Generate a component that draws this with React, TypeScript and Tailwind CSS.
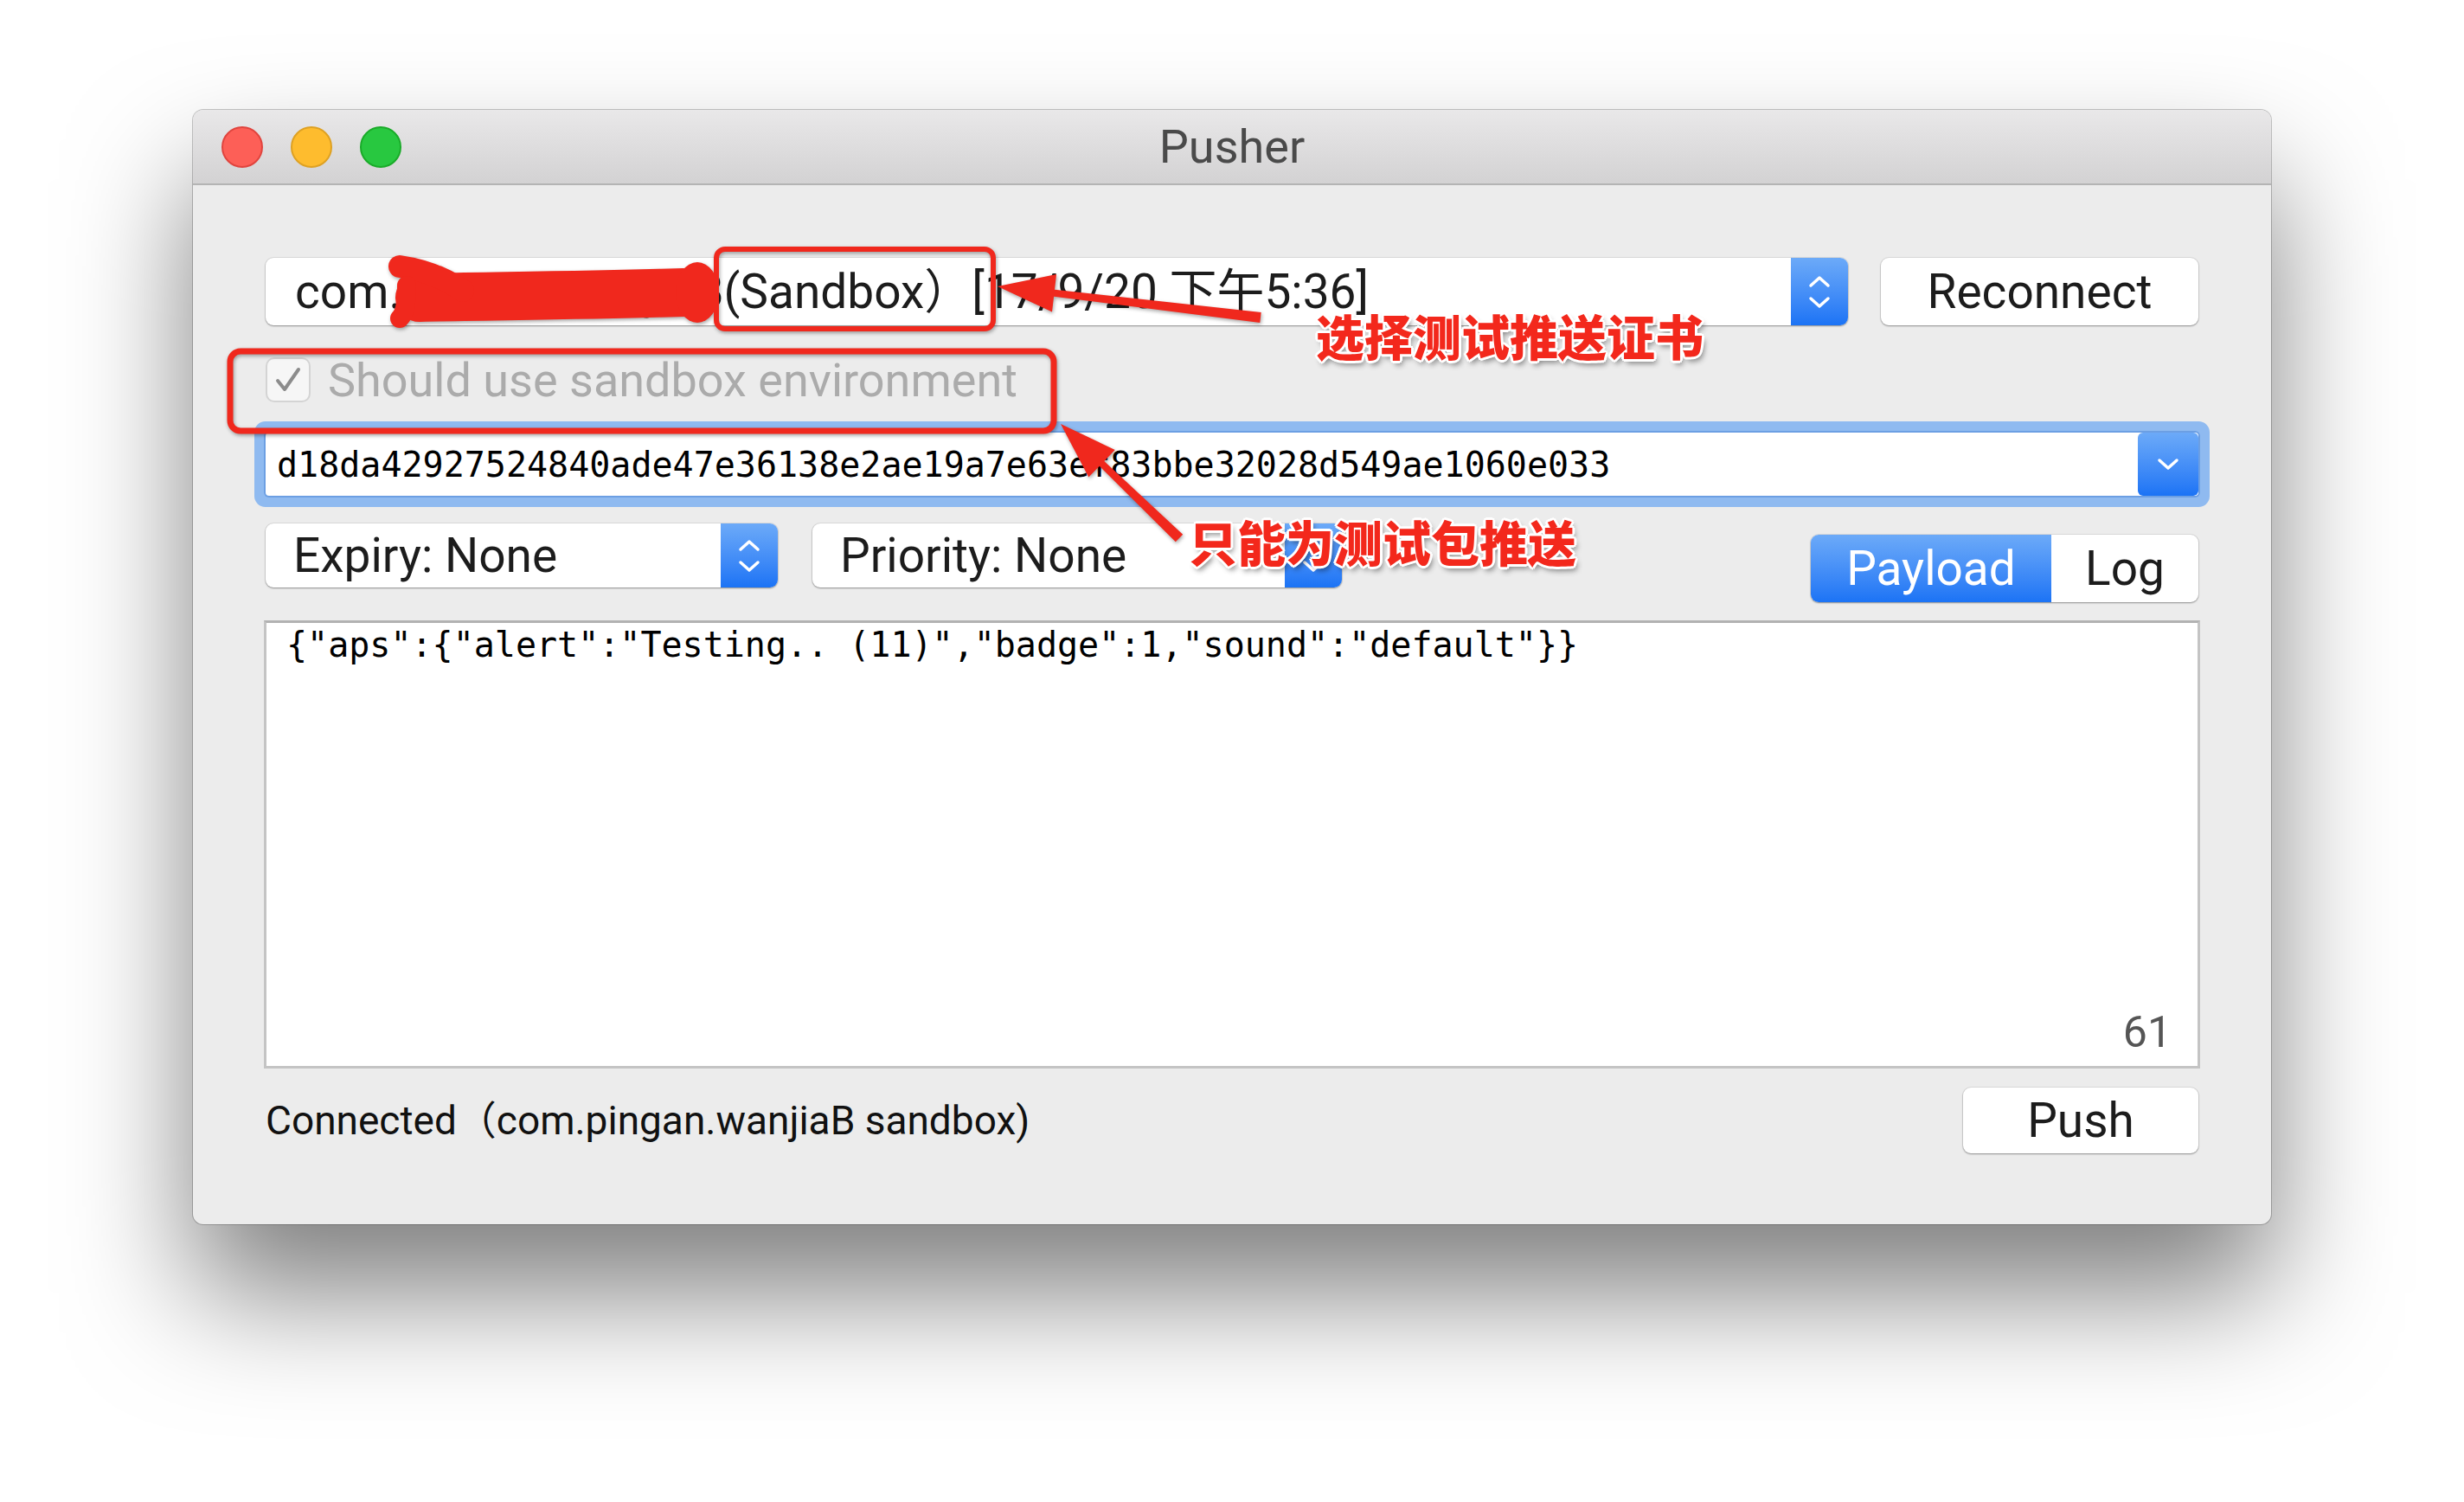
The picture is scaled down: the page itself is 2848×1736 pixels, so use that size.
import React from "react";

const ui = "font-['Roboto','Liberation_Sans','Noto_Sans_CJK_SC',sans-serif]";
const mono = "font-['DejaVu_Sans_Mono','Liberation_Mono',monospace]";
const cjk = "font-['Noto_Sans_CJK_SC','Noto_Sans',sans-serif]";

// arrow polygon from tail (tx,ty) to head (hx,hy)
function arrow(tx: number, ty: number, hx: number, hy: number, headLen = 66, headW = 22, tailW = 6, neckW = 4) {
  const dx = hx - tx;
  const dy = hy - ty;
  const len = Math.hypot(dx, dy);
  const ux = dx / len;
  const uy = dy / len;
  const nx = -uy;
  const ny = ux;
  const bx = hx - ux * headLen;
  const by = hy - uy * headLen;
  const pts = [
    [tx + nx * tailW, ty + ny * tailW],
    [bx + nx * neckW, by + ny * neckW],
    [bx + nx * headW, by + ny * headW],
    [hx, hy],
    [bx - nx * headW, by - ny * headW],
    [bx - nx * neckW, by - ny * neckW],
    [tx - nx * tailW, ty - ny * tailW],
  ];
  return pts.map((p) => p.map((v) => v.toFixed(1)).join(",")).join(" ");
}

function Chevron({ up }: { up?: boolean }) {
  return (
    <svg width="28" height="15" viewBox="0 0 28 15">
      <path
        d={up ? "M4 12 L14 3 L24 12" : "M4 3 L14 12 L24 3"}
        fill="none"
        stroke="white"
        strokeWidth="3.5"
        strokeLinecap="round"
        strokeLinejoin="round"
      />
    </svg>
  );
}

function Stepper() {
  return (
    <div className="flex w-[66px] shrink-0 flex-col items-center justify-center gap-[9px] bg-linear-to-b from-[#6caaf8] to-[#1b73f5]">
      <Chevron up />
      <Chevron />
    </div>
  );
}

function Popup({ label, className }: { label: string; className: string }) {
  return (
    <div
      className={`flex h-[74px] overflow-hidden rounded-[9px] bg-white shadow-[0_1px_2px_rgba(0,0,0,0.35),0_0_0_1px_rgba(0,0,0,0.07)] ${className}`}
    >
      <div className="flex flex-1 items-center whitespace-nowrap pl-[32px] text-[55px] text-[#1c1c1c]">{label}</div>
      <Stepper />
    </div>
  );
}

function Button({ label, className }: { label: string; className: string }) {
  return (
    <div
      className={`flex items-center justify-center rounded-[9px] bg-white text-[55px] text-[#1c1c1c] shadow-[0_1px_2px_rgba(0,0,0,0.35),0_0_0_1px_rgba(0,0,0,0.07)] ${className}`}
    >
      {label}
    </div>
  );
}

const outline =
  "[text-shadow:3px_0_0_#fff,-3px_0_0_#fff,0_3px_0_#fff,0_-3px_0_#fff,2px_2px_0_#fff,-2px_-2px_0_#fff,2px_-2px_0_#fff,-2px_2px_0_#fff,3px_5px_6px_rgba(0,0,0,0.45)]";

export default function App() {
  return (
    <div className={`relative h-[1736px] w-[2848px] overflow-hidden bg-white ${ui}`}>
      <div className="pl-[223px] pt-[127px]">
        {/* window */}
        <div className="flex h-[1288px] w-[2402px] flex-col overflow-hidden rounded-[12px] bg-[#ececec] shadow-[0_80px_140px_rgba(0,0,0,0.5),0_0_0_1px_rgba(0,0,0,0.22)]">
          {/* title bar */}
          <div className="grid h-[87px] shrink-0 grid-cols-[1fr_auto_1fr] items-center border-b-2 border-[#b4b4b4] bg-linear-to-b from-[#e9e8e9] to-[#d3d2d3]">
            <div className="flex items-center gap-[32px] pl-[33px]">
              <span className="h-[48px] w-[48px] rounded-full border-2 border-[#e0443e] bg-[#fd5f57]" />
              <span className="h-[48px] w-[48px] rounded-full border-2 border-[#dea123] bg-[#febc2e]" />
              <span className="h-[48px] w-[48px] rounded-full border-2 border-[#1aab29] bg-[#28c840]" />
            </div>
            <div className="text-[54px] text-[#4a4a4a]">Pusher</div>
            <div />
          </div>

          {/* body */}
          <div className="flex flex-1 flex-col px-[84px] pt-[84px]">
            {/* certificate row */}
            <div className="flex h-[78px] gap-[38px]">
              <div className="flex flex-1 overflow-hidden rounded-[9px] bg-white shadow-[0_1px_2px_rgba(0,0,0,0.35),0_0_0_1px_rgba(0,0,0,0.07)]">
                <div className="flex flex-1 items-center whitespace-pre pl-[34px] text-[55px] text-[#1c1c1c]">
                  com.pingan.wanjiaB(Sandbox）[17/9/20 下午5:36]
                </div>
                <Stepper />
              </div>
              <Button label="Reconnect" className="w-[367px]" />
            </div>

            {/* sandbox checkbox */}
            <div className="mt-[37px] flex h-[52px] items-center gap-[20px]">
              <div className="flex h-[52px] w-[52px] items-center justify-center rounded-[10px] border-2 border-[#d4d4d4] bg-[#f6f6f6]">
                <svg width="34" height="34" viewBox="0 0 34 34">
                  <path d="M5 18 L13 28 L29 5" fill="none" stroke="#8c8c8c" strokeWidth="4" strokeLinecap="round" strokeLinejoin="round" />
                </svg>
              </div>
              <span className="text-[54px] text-[#ababab]">Should use sandbox environment</span>
            </div>

            {/* device token (focused) */}
            <div className="mt-[35px] flex h-[73px] overflow-hidden rounded-[4px] bg-white shadow-[0_0_0_2px_#6c9fe3,0_0_0_13px_#8fbaf0]">
              <div className={`flex flex-1 items-center pl-[13px] text-[40px] text-black ${mono}`}>
                d18da42927524840ade47e36138e2ae19a7e63ef83bbe32028d549ae1060e033
              </div>
              <div className="flex w-[70px] items-center justify-center rounded-[6px] bg-linear-to-b from-[#6caaf8] to-[#1b73f5]">
                <Chevron />
              </div>
            </div>

            {/* expiry / priority / tabs */}
            <div className="mt-[32px] flex h-[91px]">
              <Popup label="Expiry: None" className="w-[592px]" />
              <Popup label="Priority: None" className="ml-[40px] w-[612px]" />
              <div className="ml-auto mt-[13px] flex h-[78px] w-[448px] overflow-hidden rounded-[9px] bg-white text-[55px] shadow-[0_1px_2px_rgba(0,0,0,0.35),0_0_0_1px_rgba(0,0,0,0.07)]">
                <div className="flex w-[278px] items-center justify-center bg-linear-to-b from-[#6caaf8] to-[#1b73f5] text-white">
                  Payload
                </div>
                <div className="flex flex-1 items-center justify-center text-[#1c1c1c]">Log</div>
              </div>
            </div>

            {/* payload text */}
            <div className="-mx-[2px] mt-[21px] flex h-[518px] flex-col border-[3px] border-[#c4c4c4] border-t-[#b2b2b2] bg-white pb-[14px] pl-[23px] pr-[30px] pt-[3px]">
              <div className={`text-[40px] leading-[44px] text-black ${mono}`}>
                {'{"aps":{"alert":"Testing.. (11)","badge":1,"sound":"default"}}'}
              </div>
              <div className="mt-auto self-end text-[50px] leading-none text-[#555]">61</div>
            </div>

            {/* status row */}
            <div className="mt-[22px] flex h-[76px] items-center justify-between">
              <span className="text-[46px] text-[#111]">Connected（com.pingan.wanjiaB sandbox)</span>
              <Button label="Push" className="h-[76px] w-[272px]" />
            </div>
          </div>
        </div>
      </div>

      {/* annotations */}
      <svg
        className="pointer-events-none absolute left-0 top-0 drop-shadow-[1px_2px_2px_rgba(0,0,0,0.35)]"
        width="2848"
        height="1736"
        viewBox="0 0 2848 1736"
      >
        {/* redaction scribble */}
        <g stroke="#f0281d" fill="none" strokeLinecap="round" strokeLinejoin="round">
          <path d="M485 344 C560 342 660 342 790 338" strokeWidth="56" />
          <path d="M462 308 C490 312 515 322 535 336" strokeWidth="26" />
          <path d="M470 330 C470 350 468 362 462 368" strokeWidth="22" />
        </g>
        <ellipse cx="806" cy="338" rx="25" ry="35" fill="#f0281d" />
        <rect x="828" y="288" width="320" height="92" rx="10" fill="none" stroke="#f0281d" strokeWidth="6" />
        <rect x="266" y="406" width="952" height="92" rx="12" fill="none" stroke="#f0281d" strokeWidth="7" />
        <polygon points={arrow(1457, 367, 1153, 331)} fill="#f0281d" />
        <polygon points={arrow(1363, 622, 1226, 490)} fill="#f0281d" />
      </svg>

      <div
        className={`absolute left-[1521px] top-[359px] text-[56px] font-black leading-none text-[#f3281c] ${cjk} ${outline}`}
      >
        选择测试推送证书
      </div>
      <div
        className={`absolute left-[1374px] top-[597px] text-[56px] font-black leading-none text-[#f3281c] ${cjk} ${outline}`}
      >
        只能为测试包推送
      </div>
    </div>
  );
}
